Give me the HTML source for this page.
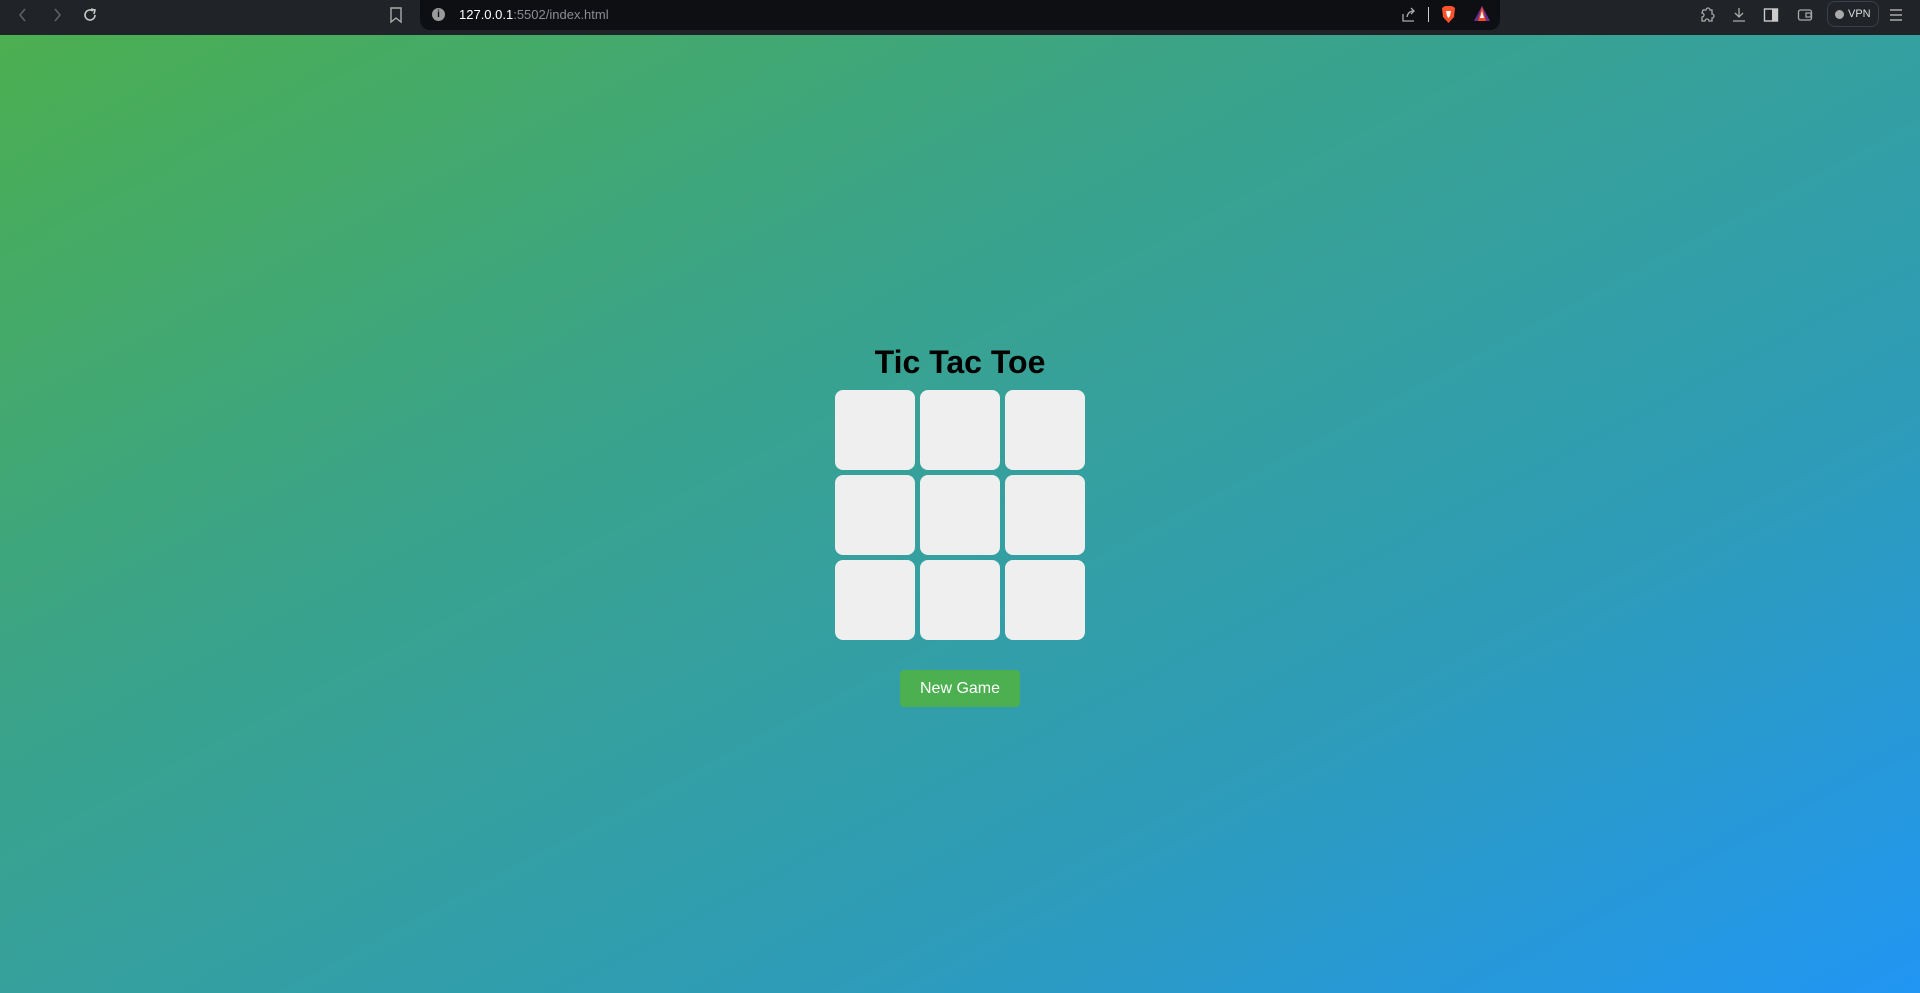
<!DOCTYPE html>
<html><head><meta charset="utf-8"><style>
*{margin:0;padding:0;box-sizing:border-box}
html,body{width:1920px;height:993px;overflow:hidden;font-family:"Liberation Sans",Arial,sans-serif}
.bar{position:absolute;left:0;top:0;width:1920px;height:35px;background:#202327}
.url{position:absolute;left:420px;top:0;width:1080px;height:30px;background:#0d0f13;border-radius:0 0 10px 10px}
.ic{position:absolute;top:6px}
.main{position:absolute;left:0;top:35px;width:1920px;height:958px;background:linear-gradient(152deg,#4caf50 0%,#3aa38a 35%,#2e9cb8 70%,#2196f3 100%)}
h1{position:absolute;left:0;width:1920px;top:344px;text-align:center;font-size:32px;font-weight:bold;color:#000}
.cell{position:absolute;width:80px;height:80px;background:#efefef;border-radius:8px}
.btn{position:absolute;left:900px;top:635px;width:120px;height:37px;background:#4caf50;border-radius:4px;color:#fff;font-size:16px;text-align:center;line-height:37px}
</style></head><body>
<div class="bar">
<svg class="ic" style="left:15px" width="16" height="18" viewBox="0 0 16 18"><path d="M10 3 L5 9 L10 15" stroke="#5f6368" stroke-width="1.5" fill="none"/></svg>
<svg class="ic" style="left:49px" width="16" height="18" viewBox="0 0 16 18"><path d="M6 3 L11 9 L6 15" stroke="#5f6368" stroke-width="1.5" fill="none"/></svg>
<svg class="ic" style="left:81px" width="18" height="18" viewBox="0 0 18 18"><path d="M14 9 A5 5 0 1 1 12 5" stroke="#c8c8c8" stroke-width="1.6" fill="none"/><path d="M10 3 L14 4 L13 8" stroke="#c8c8c8" stroke-width="1.6" fill="none"/></svg>
<svg class="ic" style="left:389px" width="14" height="18" viewBox="0 0 14 18"><path d="M2 2 H12 V16 L7 12 L2 16 Z" stroke="#aaa" stroke-width="1.4" fill="none"/></svg>
<div class="url">
<div style="position:absolute;left:12px;top:8px;width:13px;height:13px;border-radius:50%;background:#9a9a9a;color:#0d0f13;font-size:10px;font-weight:bold;text-align:center;line-height:13px">i</div>
<div style="position:absolute;left:39px;top:7px;font-size:13px;color:#fff">127.0.0.1<span style="color:#8a8d93">:5502/index.html</span></div>
<svg style="position:absolute;left:980px;top:6px" width="18" height="18" viewBox="0 0 18 18"><path d="M3 8 V15 H14 M7 11 Q8 5 14 5 M11 2 L14 5 L11 8" stroke="#aaa" stroke-width="1.3" fill="none"/></svg>
<div style="position:absolute;left:1008px;top:7px;width:1px;height:15px;background:#ccc"></div>
<svg style="position:absolute;left:1020px;top:5px" width="17" height="19" viewBox="0 0 17 19"><path d="M2 3 L5 1 H12 L15 3 L14 12 L8.5 18 L3 12 Z" fill="#fb542b"/><path d="M6 6 H11 L10 11 L8.5 13 L7 11 Z" fill="#fff"/></svg>
<svg style="position:absolute;left:1053px;top:5px" width="18" height="18" viewBox="0 0 18 18"><path d="M9 1 L17 16 H1 Z" fill="#6a2c91"/><path d="M9 1 L13 16 H5 Z" fill="#f04e23"/><path d="M9 6 L11 13 H7 Z" fill="#fff"/></svg>
</div>
<svg class="ic" style="left:1698px" width="18" height="18" viewBox="0 0 18 18"><path d="M5 4 H8 A2 2 0 0 1 12 4 H14 V8 A2 2 0 0 1 14 12 V15 H11 A2 2 0 0 0 7 15 H4 V11 A2 2 0 0 0 4 7 Z" stroke="#aaa" stroke-width="1.3" fill="none"/></svg>
<svg class="ic" style="left:1731px" width="16" height="18" viewBox="0 0 16 18"><path d="M8 2 V11 M4 7 L8 11 L12 7 M2 15 H14" stroke="#aaa" stroke-width="1.3" fill="none"/></svg>
<svg class="ic" style="left:1763px" width="16" height="18" viewBox="0 0 16 18"><rect x="1.5" y="3" width="13" height="12" stroke="#ccc" stroke-width="1.4" fill="none"/><rect x="9" y="3" width="5.5" height="12" fill="#ccc"/></svg>
<svg class="ic" style="left:1797px" width="16" height="18" viewBox="0 0 16 18"><rect x="1.5" y="4" width="13" height="10" rx="2" stroke="#aaa" stroke-width="1.3" fill="none"/><rect x="9" y="7" width="5" height="4" stroke="#aaa" stroke-width="1.2" fill="none"/></svg>
<div style="position:absolute;left:1827px;top:1px;width:52px;height:26px;border:1px solid #3c4046;border-radius:8px;color:#ddd;font-size:11px;line-height:24px;padding-left:20px">VPN<div style="position:absolute;left:7px;top:8px;width:9px;height:9px;border-radius:50%;background:#aaa"></div></div>
<svg class="ic" style="left:1888px" width="16" height="18" viewBox="0 0 16 18"><path d="M2 4 H14 M2 9 H14 M2 14 H14" stroke="#aaa" stroke-width="1.4"/></svg>
</div>
<div class="main"></div>
<h1>Tic Tac Toe</h1>
<div class="cell" style="left:835px;top:390px"></div>
<div class="cell" style="left:920px;top:390px"></div>
<div class="cell" style="left:1005px;top:390px"></div>
<div class="cell" style="left:835px;top:475px"></div>
<div class="cell" style="left:920px;top:475px"></div>
<div class="cell" style="left:1005px;top:475px"></div>
<div class="cell" style="left:835px;top:560px"></div>
<div class="cell" style="left:920px;top:560px"></div>
<div class="cell" style="left:1005px;top:560px"></div>
<div class="btn" style="top:670px">New Game</div>
</body></html>
